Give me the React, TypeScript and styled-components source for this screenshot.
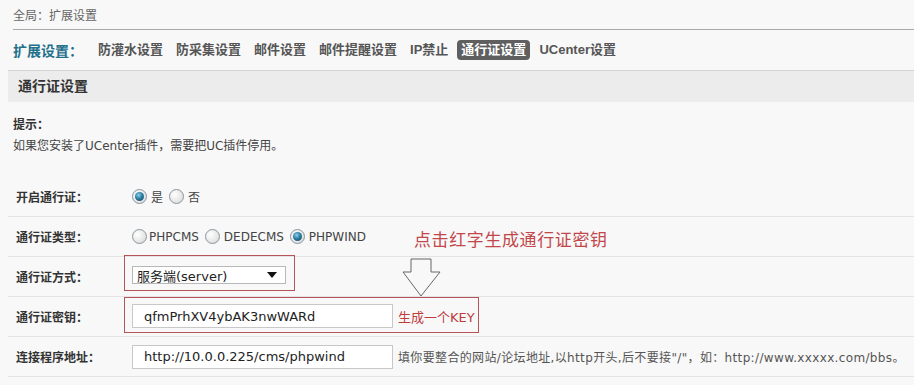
import React from 'react'
import styled, { createGlobalStyle } from 'styled-components'

const GlobalStyle = createGlobalStyle`
  html, body {
    margin: 0;
    padding: 0;
    background: #f8f8f8;
  }
  body {
    font-family: 'DejaVu Sans', 'Noto Sans CJK SC', sans-serif;
    font-size: 12px;
    color: #444;
  }
`

const Page = styled.div`
  width: 914px;
  height: 385px;
  overflow: hidden;
  background: #f8f8f8;
`

const Crumb = styled.div`
  height: 29px;
  margin-left: 13px;
  border-bottom: 1px solid #a8a8a8;
  display: flex;
  align-items: center;
  color: #666;
  font-size: 12px;
`

const Nav = styled.div`
  height: 40px;
  margin-left: 8px;
  padding-left: 5px;
  border-bottom: 1px solid #d4d4d4;
  display: flex;
  align-items: center;
  gap: 5px;
  font-family: 'Liberation Sans', 'Noto Sans CJK SC', sans-serif;
`

const NavTitle = styled.span`
  font-size: 14px;
  font-weight: bold;
  color: #22708c;
  margin-right: 6px;
`

const NavItem = styled.span<{ $active?: boolean }>`
  font-size: 13px;
  font-weight: bold;
  padding: 0 4px;
  height: 20px;
  line-height: 20px;
  border-radius: 4px;
  color: ${p => (p.$active ? '#fff' : '#555')};
  background: ${p => (p.$active ? '#5f5f5f' : 'transparent')};
`

const SectionTitle = styled.div`
  height: 31px;
  margin-left: 8px;
  padding-left: 10px;
  background: #ececec;
  font-size: 14px;
  font-weight: bold;
  color: #333;
  line-height: 31px;
`

const Tip = styled.div`
  padding: 13px 0 0 13px;
  margin-bottom: 20px;
  line-height: 21px;
  color: #444;
`

const TipTitle = styled.div`
  font-weight: bold;
  color: #333;
`

const Form = styled.div`
  position: relative;
  margin-left: 8px;
`

const Row = styled.div`
  height: 39px;
  border-bottom: 1px solid #e4e4e4;
  display: flex;
  align-items: center;
`

const Label = styled.div`
  width: 124px;
  padding-left: 8px;
  box-sizing: border-box;
  font-size: 12px;
  font-weight: bold;
  color: #333;
  flex-shrink: 0;
`

const Controls = styled.div<{ $gap?: number }>`
  display: flex;
  align-items: center;
  gap: ${p => p.$gap ?? 6}px;
`

const RadioLabel = styled.label<{ $gap?: number }>`
  display: inline-flex;
  align-items: center;
  gap: ${p => p.$gap ?? 4}px;
  color: #444;
`

const RadioMark = styled.span<{ $checked?: boolean }>`
  width: 13px;
  height: 13px;
  border-radius: 50%;
  border: 1px solid #8a969c;
  background: radial-gradient(circle at 35% 35%, #ffffff 0%, #e6e6e6 60%, #cfcfcf 100%);
  display: inline-flex;
  align-items: center;
  justify-content: center;
  &::after {
    content: '';
    display: ${p => (p.$checked ? 'block' : 'none')};
    width: 9px;
    height: 9px;
    border-radius: 50%;
    background: radial-gradient(circle at 40% 35%, #8fd0ea 0%, #2b7fa3 45%, #0c3a50 100%);
  }
`

const Annot = styled.div<{ $top: number; $pad: string }>`
  display: inline-flex;
  align-items: center;
  gap: 5px;
  margin-left: -8px;
  align-self: flex-start;
  margin-top: ${p => p.$top}px;
  padding: ${p => p.$pad};
  border: 1px solid #b5555a;
  box-sizing: border-box;
`

const SelectBox = styled.div`
  width: 154px;
  height: 18px;
  box-sizing: border-box;
  border: 1px solid #b8b8b8;
  background: #fff;
  display: flex;
  align-items: center;
  justify-content: space-between;
  padding: 0 8px 0 4px;
  font-size: 13px;
  color: #222;
`

const Caret = styled.span`
  width: 0;
  height: 0;
  border-left: 5px solid transparent;
  border-right: 5px solid transparent;
  border-top: 6px solid #111;
`

const TextBox = styled.div`
  width: 261px;
  height: 24px;
  box-sizing: border-box;
  border: 1px solid #c8c8c8;
  background: #fff;
  padding-left: 11px;
  display: flex;
  align-items: center;
  font-size: 13px;
  color: #222;
`

const RedLink = styled.span`
  color: #c0393b;
  font-size: 13px;
`

const Hint = styled.span`
  color: #555;
  font-size: 12px;
  letter-spacing: 0.35px;
`

const Callout = styled.div`
  position: absolute;
  left: 406px;
  top: 53px;
  font-size: 17px;
  line-height: 20px;
  color: #c2474b;
  letter-spacing: 0.6px;
`

const Arrow = styled.svg`
  position: absolute;
  left: 394px;
  top: 81px;
`

const Radio = ({ checked, gap, children }: { checked?: boolean; gap?: number; children: React.ReactNode }) => (
  <RadioLabel $gap={gap}>
    <RadioMark $checked={checked} />
    {children}
  </RadioLabel>
)

const navItems = ['防灌水设置', '防采集设置', '邮件设置', '邮件提醒设置', 'IP禁止', '通行证设置', 'UCenter设置']

export default function App() {
  return (
    <Page>
      <GlobalStyle />
      <Crumb>全局：扩展设置</Crumb>
      <Nav>
        <NavTitle>扩展设置：</NavTitle>
        {navItems.map(n => (
          <NavItem key={n} $active={n === '通行证设置'}>{n}</NavItem>
        ))}
      </Nav>
      <SectionTitle>通行证设置</SectionTitle>
      <Tip>
        <TipTitle>提示：</TipTitle>
        <div>如果您安装了UCenter插件，需要把UC插件停用。</div>
      </Tip>
      <Form>
        <Row>
          <Label>开启通行证：</Label>
          <Controls>
            <Radio checked>是</Radio>
            <Radio>否</Radio>
          </Controls>
        </Row>
        <Row>
          <Label>通行证类型：</Label>
          <Controls>
            <Radio gap={2}>PHPCMS</Radio>
            <Radio>DEDECMS</Radio>
            <Radio checked>PHPWIND</Radio>
          </Controls>
        </Row>
        <Row>
          <Label>通行证方式：</Label>
          <Annot $top={-2} $pad="10px 8px 6px 7px">
            <SelectBox>
              服务端(server)
              <Caret />
            </SelectBox>
          </Annot>
        </Row>
        <Row>
          <Label>通行证密钥：</Label>
          <Annot $top={0} $pad="6px 3px 4px 7px">
            <TextBox>qfmPrhXV4ybAK3nwWARd</TextBox>
            <RedLink>生成一个KEY</RedLink>
          </Annot>
        </Row>
        <Row>
          <Label>连接程序地址：</Label>
          <Controls $gap={5}>
            <TextBox>http://10.0.0.225/cms/phpwind</TextBox>
            <Hint>填你要整合的网站/论坛地址,以http开头,后不要接"/"，如：http://www.xxxxx.com/bbs。</Hint>
          </Controls>
        </Row>
        <Callout>点击红字生成通行证密钥</Callout>
        <Arrow width="40" height="40" viewBox="0 0 40 40">
          <path d="M9 1 H29 V14 H38 L19 38 L1 14 H9 Z" fill="#f8f8f8" stroke="#666" strokeWidth="1" />
        </Arrow>
      </Form>
    </Page>
  )
}
